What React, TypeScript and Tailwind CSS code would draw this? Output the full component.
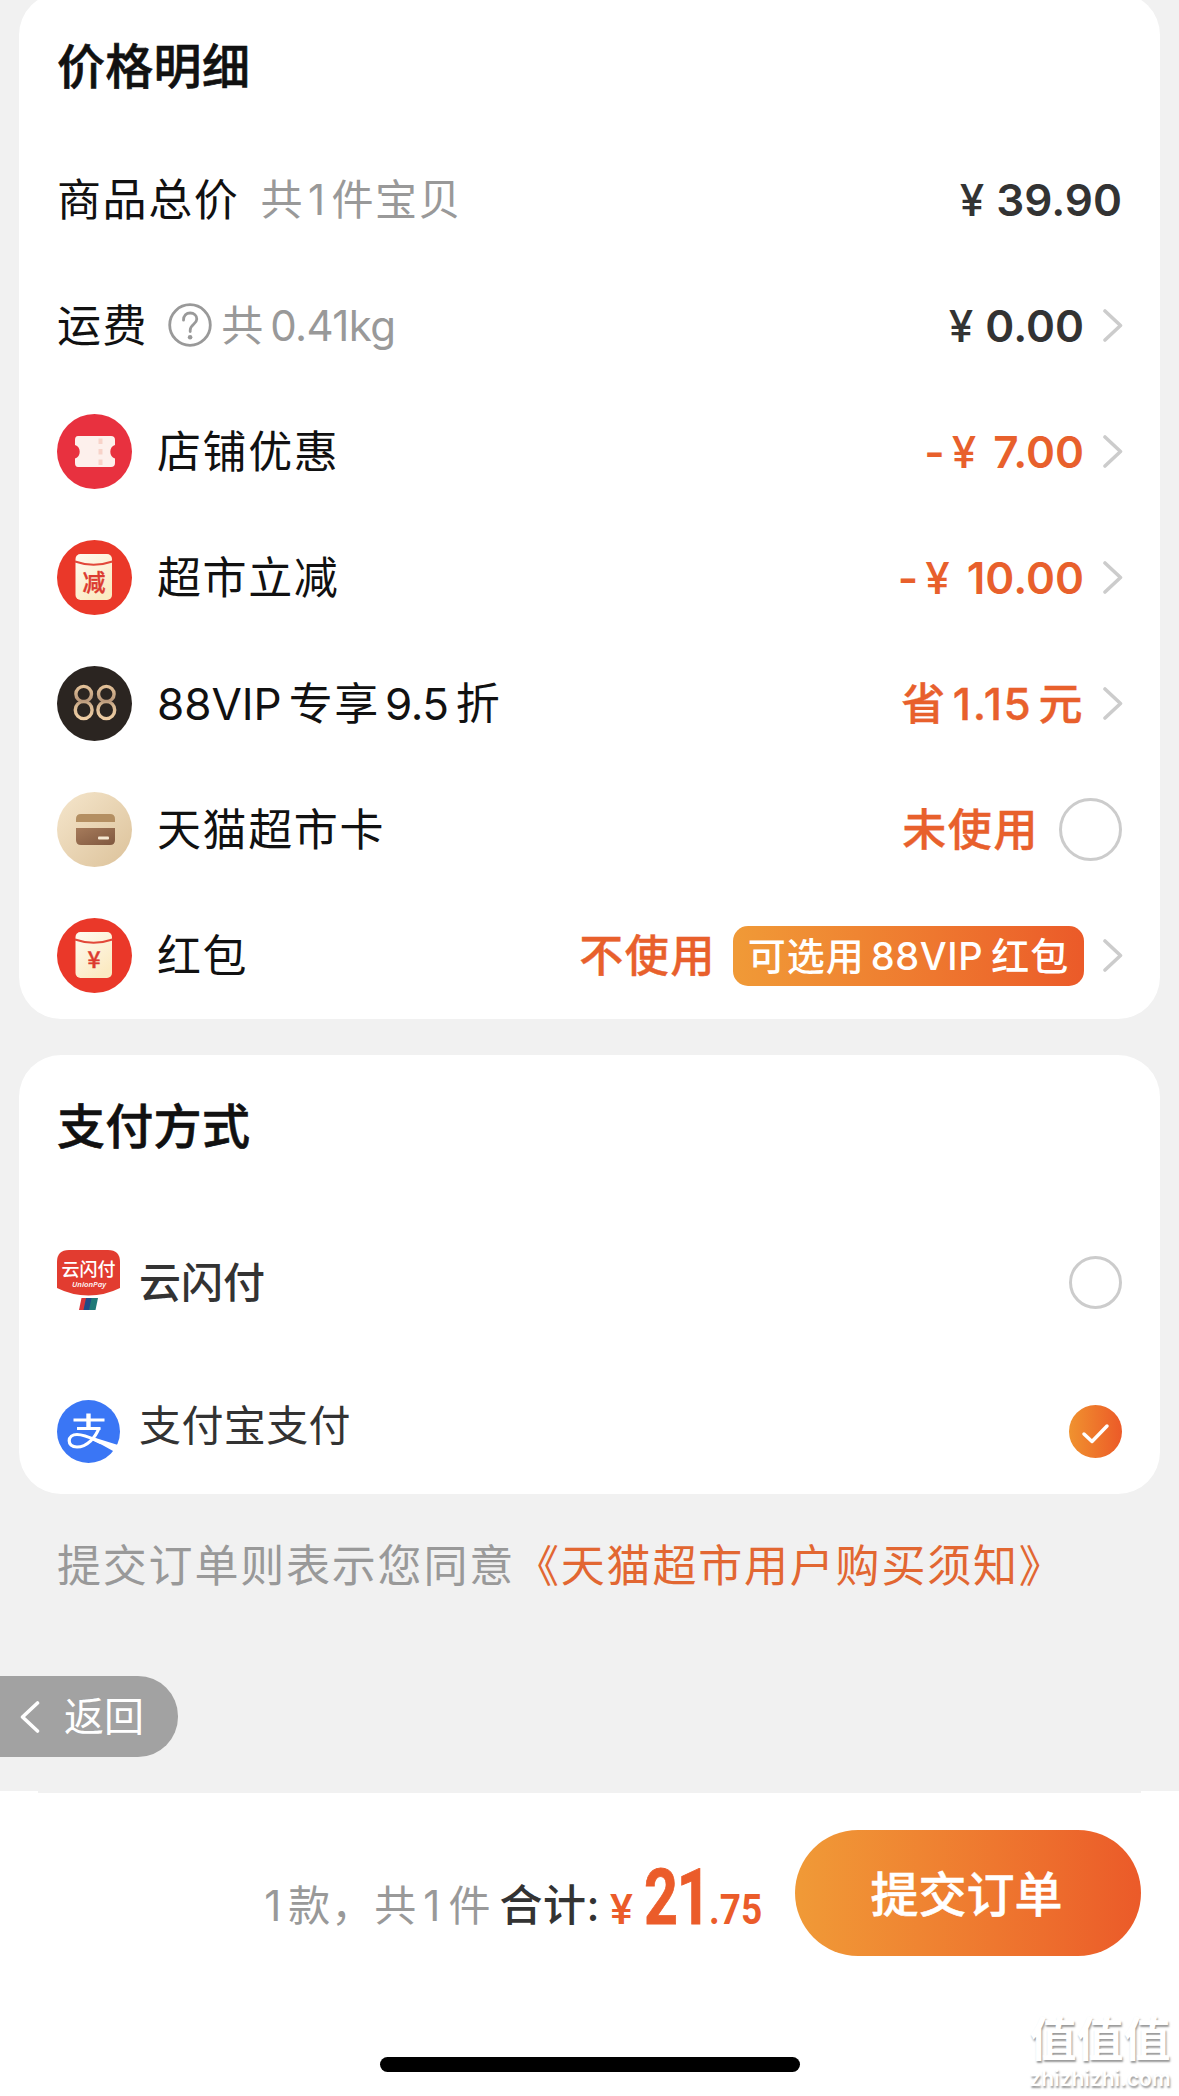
import type { ReactNode } from "react";
import { clsx } from "clsx";

const Chevron = () => (
  <svg className="ml-[17px] -mr-px w-[22px] h-[34px] shrink-0" viewBox="0 0 22 34" fill="none">
    <path d="M4 3 L19.5 17.5 L4 32" stroke="#cccccc" strokeWidth="3.6" strokeLinecap="round" strokeLinejoin="round" />
  </svg>
);

const HelpIcon = () => (
  <svg className="w-[44px] h-[44px] shrink-0" viewBox="0 0 44 44" fill="none" stroke="#999999" strokeWidth="2.8">
    <circle cx="22" cy="22" r="20.3" />
    <path d="M15.5 17.2 C15.5 12.5 18.5 10 22.2 10 C26 10 28.8 12.6 28.8 16 C28.8 21.2 22.2 21.4 22.2 27.2 V28.5" strokeLinecap="round" />
    <circle cx="22.1" cy="34.2" r="2.3" fill="#999999" stroke="none" />
  </svg>
);

const CouponIcon = () => (
  <svg className="w-[75px] h-[75px]" viewBox="0 0 75 75">
    <circle cx="37.5" cy="37.5" r="37.5" fill="#e8313f" />
    <path
      d="M21 22 H54 Q58 22 58 26 V31 A7.2 7.2 0 0 0 58 44.5 V49 Q58 53 54 53 H21 Q18 53 18 49 V44.5 A7.2 7.2 0 0 0 18 31 V26 Q18 22 21 22 Z"
      fill="#fdf0ec"
    />
    <path d="M43.5 24.5 V30 M43.5 35 V40.5 M43.5 45.5 V51" stroke="#f8d3c9" strokeWidth="4" />
  </svg>
);

const PacketIcon = ({ label, id }: { label: string; id: string }) => (
  <svg className="w-[75px] h-[75px]" viewBox="0 0 75 75">
    <defs>
      <linearGradient id={id} x1="0" y1="0" x2="0.6" y2="1">
        <stop offset="0" stopColor="#fffaf0" />
        <stop offset="1" stopColor="#fbeac2" />
      </linearGradient>
    </defs>
    <circle cx="37.5" cy="37.5" r="37.5" fill="#ea3829" />
    <rect x="18.5" y="14" width="36.5" height="46" rx="5" fill={`url(#${id})`} />
    <path d="M18 21.5 Q36.5 28 55.5 21.5" fill="none" stroke="#e2483a" strokeWidth="2" />
    <text
      x="37"
      y={label === "减" ? 50.5 : 49.5}
      textAnchor="middle"
      fontSize="23"
      fontWeight="500"
      stroke="#dc3a30"
      strokeWidth="0.4"
      fill="#dc3a30"
      fontFamily="'Noto Sans CJK SC', sans-serif"
    >
      {label}
    </text>
  </svg>
);

const VipIcon = () => (
  <svg className="w-[75px] h-[75px]" viewBox="0 0 75 75">
    <defs>
      <linearGradient id="vip" gradientUnits="userSpaceOnUse" x1="0" y1="19" x2="0" y2="54">
        <stop offset="0" stopColor="#e6c49a" />
        <stop offset="0.45" stopColor="#b8977a" />
        <stop offset="0.6" stopColor="#d9b993" />
        <stop offset="1" stopColor="#f0cfa5" />
      </linearGradient>
    </defs>
    <circle cx="37.5" cy="37.5" r="37.5" fill="#2b2521" />
    <g fill="none" stroke="url(#vip)" strokeWidth="3.4">
      <ellipse cx="26.7" cy="28" rx="7.8" ry="7.6" />
      <ellipse cx="26.7" cy="44" rx="8.4" ry="8.6" />
      <ellipse cx="49.3" cy="28" rx="7.8" ry="7.6" />
      <ellipse cx="49.3" cy="44" rx="8.4" ry="8.6" />
    </g>
  </svg>
);

const CardIcon = () => (
  <svg className="w-[75px] h-[75px]" viewBox="0 0 75 75">
    <defs>
      <linearGradient id="cardBg" x1="0" y1="0" x2="1" y2="1">
        <stop offset="0" stopColor="#f5e6cc" />
        <stop offset="1" stopColor="#dcc29a" />
      </linearGradient>
      <linearGradient id="cardBody" x1="0" y1="0" x2="1" y2="1">
        <stop offset="0" stopColor="#a67b5b" />
        <stop offset="1" stopColor="#80583f" />
      </linearGradient>
    </defs>
    <circle cx="37.5" cy="37.5" r="37.5" fill="url(#cardBg)" />
    <path d="M19 30 V27 Q19 22 24 22 H53 Q58 22 58 27 V30 Z" fill="#b48f62" />
    <path d="M19 36 H58 V48 Q58 53 53 53 H24 Q19 53 19 48 Z" fill="url(#cardBody)" />
    <rect x="41" y="44.5" width="11" height="3" rx="1" fill="#f6e8d2" />
  </svg>
);

const UnionPayIcon = () => (
  <svg className="mb-[2px] w-[63px] h-[63px]" viewBox="0 0 63 63">
    <path d="M12 0 H51 Q63 0 63 12 V38 Q48 45.5 31.5 45.5 Q15 45.5 0 38 V12 Q0 0 12 0 Z" fill="#e23c30" />
    <text x="31.5" y="26" textAnchor="middle" fontSize="18" fontWeight="500" fill="#fff" fontFamily="'Noto Sans CJK SC', sans-serif">
      云闪付
    </text>
    <text x="32" y="37" textAnchor="middle" fontSize="7.8" fontStyle="italic" fontWeight="600" fill="#fff" fontFamily="'Open Sans', sans-serif">
      UnionPay
    </text>
    <path d="M24.5 48 H30 L27.5 60 H22 Z" fill="#d8353a" />
    <path d="M29 48 H35.5 L33 60 H26.5 Z" fill="#1f4a86" />
    <path d="M34.5 48 H41 L38.5 60 H32 Z" fill="#1f7a78" />
  </svg>
);

const AlipayIcon = () => (
  <svg className="w-[63px] h-[63px]" viewBox="0 0 63 63" fill="none" stroke="#fff">
    <circle cx="31.5" cy="31.5" r="31.5" fill="#3a76f5" stroke="none" />
    <path d="M16.5 20 H47.5 M20 28.5 H43.5" strokeWidth="3" />
    <path d="M31.5 13.5 V28" strokeWidth="4.4" />
    <path d="M42 28 C38.5 37.5 30 47 20 47 C14.5 47 12.2 44 12.2 40.8 C12.2 37 15.500 34.5 20 34.5 C28 34.5 36 39 44 42.5" strokeWidth="3.2" />
    <path d="M37 37.5 L61 45 L57 51.500 Q46 45 35 40 Z" fill="#fff" stroke="none" />
  </svg>
);

type RowProps = {
  icon?: ReactNode;
  label: ReactNode;
  extra?: ReactNode;
  children: ReactNode;
};

const Row = ({ icon, label, extra, children }: RowProps) => (
  <div className="h-[126px] flex items-center whitespace-nowrap">
    {icon && <div className="mr-[25px] shrink-0">{icon}</div>}
    <span className="pt-[2px] text-[44px] tracking-[1.6px] text-[#111111]">{label}</span>
    {extra}
    <div className="ml-auto flex items-center">{children}</div>
  </div>
);

const Price = ({ amount, minus }: { amount: string; minus?: boolean }) => (
  <span className={clsx("pt-[2px] text-[44px] font-semibold flex items-center", minus ? "text-[#e8602c]" : "text-[#333333]")}>
    {minus && <span className="mr-[7px]">-</span>}
    <span className={clsx("font-medium", minus ? "mr-[17px]" : "mr-[12px]")}>¥</span>
    <span>{amount}</span>
  </span>
);

const Status = ({ children }: { children: ReactNode }) => (
  <span className="pt-[2px] text-[44px] font-medium tracking-[1.6px] text-[#e8602c] [-webkit-text-stroke:0.4px_#e8602c]">{children}</span>
);

const discounts = [
  { icon: <CouponIcon />, label: "店铺优惠", amount: "7.00" },
  { icon: <PacketIcon label="减" id="packetCut" />, label: "超市立减", amount: "10.00" },
];

const App = () => {
  return (
    <div className="relative w-[1179px] h-[2096px] overflow-hidden flex flex-col bg-[#f1f1f1] leading-none font-['Inter','Noto_Sans_CJK_SC',sans-serif]">
      {/* price details */}
      <section className="mt-[-7px] mx-[19px] h-[1026px] shrink-0 rounded-[42px] bg-white px-[38px]">
        <h2 className="h-[143px] pt-[4px] flex items-center text-[48px] font-medium tracking-[0.3px] text-[#111111] [-webkit-text-stroke:0.6px_#111111]">
          价格明细
        </h2>
        <Row
          label="商品总价"
          extra={
            <span className="pt-[2px] ml-[21px] text-[42px] tracking-[1.5px] text-[#999999]">
              共<span className="ml-[4px] mr-[5px]">1</span>件宝贝
            </span>
          }
        >
          <Price amount="39.90" />
        </Row>
        <Row
          label="运费"
          extra={
            <div className="ml-[20px] flex items-center gap-[9px] text-[42px] text-[#999999]">
              <HelpIcon />
              <span className="pt-[2px]">共<span className="ml-[7px] tracking-[-0.6px]">0.41kg</span></span>
            </div>
          }
        >
          <Price amount="0.00" />
          <Chevron />
        </Row>
        {discounts.map((item) => (
          <Row key={item.label} icon={item.icon} label={item.label}>
            <Price amount={item.amount} minus />
            <Chevron />
          </Row>
        ))}
        <Row
          icon={<VipIcon />}
          label={
            <>
              <span className="mr-[7px]">
                <span className="tracking-normal">88VIP</span>
              </span>
              专享
              <span className="ml-[5px] mr-[7px] tracking-[-0.4px]">9.5</span>折
            </>
          }
        >
          <Status>省<span className="ml-[6px] mr-[6px]">1.15</span>元</Status>
          <Chevron />
        </Row>
        <Row icon={<CardIcon />} label="天猫超市卡">
          <Status>未使用</Status>
          <span className="ml-[20px] w-[63px] h-[63px] rounded-full border-[3px] border-[#cccccc]" />
        </Row>
        <Row icon={<PacketIcon label="¥" id="packetYuan" />} label="红包">
          <Status>不使用</Status>
          <span className="ml-[17px] mt-px w-[351px] h-[60px] rounded-[15px] bg-linear-to-r from-[#f09a37] to-[#eb5a29] flex items-center justify-center text-[38px] font-medium tracking-[1px] text-white">
            可选用<span className="ml-[6px] mr-[8px] tracking-[0.6px]">88VIP</span>红包
          </span>
          <Chevron />
        </Row>
      </section>

      {/* payment method */}
      <section className="mt-[36px] mx-[19px] h-[439px] shrink-0 rounded-[42px] bg-white px-[38px]">
        <h2 className="h-[140px] pt-[3px] flex items-center text-[48px] font-medium tracking-[0.3px] text-[#111111] [-webkit-text-stroke:0.6px_#111111]">
          支付方式
        </h2>
        <div className="mt-[13px] h-[148px] flex items-center">
          <UnionPayIcon />
          <span className="ml-[19px] pt-px text-[42px] font-medium text-[#333333]">云闪付</span>
          <span className="ml-auto w-[53px] h-[53px] rounded-full border-[3px] border-[#cccccc]" />
        </div>
        <div className="mt-px h-[148px] flex items-center">
          <AlipayIcon />
          <span className="ml-[19px] mb-[10px] text-[42px] tracking-[0.4px] text-[#333333]">支付宝支付</span>
          <svg className="ml-auto w-[53px] h-[53px]" viewBox="0 0 53 53">
            <defs>
              <linearGradient id="check">
                <stop offset="0" stopColor="#f0922f" />
                <stop offset="1" stopColor="#ec5a28" />
              </linearGradient>
            </defs>
            <circle cx="26.5" cy="26.5" r="26.5" fill="url(#check)" />
            <path d="M15 29 L23 36.5 L38 21" fill="none" stroke="#fff" strokeWidth="3.5" strokeLinecap="round" strokeLinejoin="round" />
          </svg>
        </div>
      </section>

      <p className="h-[142px] pt-[2px] shrink-0 pl-[57px] flex items-center whitespace-nowrap text-[44px] tracking-[1.8px] text-[#999999]">
        提交订单则表示您同意<span className="text-[#e26732]">《天猫超市用户购买须知》</span>
      </p>

      <button className="mt-[40px] w-[178px] h-[81px] shrink-0 rounded-r-[40px] bg-[#a2a2a2] pl-[19px] flex items-center text-[40px] text-white">
        <svg className="w-[22px] h-[32px] mr-[23px]" viewBox="0 0 22 32" fill="none">
          <path d="M18.5 2 L3.5 16 L18.5 30" stroke="#fff" strokeWidth="3.6" strokeLinecap="round" strokeLinejoin="round" />
        </svg>
        返回
      </button>

      {/* submit bar */}
      <footer className="mt-[34px] flex-1 bg-white flex flex-col">
        <div className="mx-[38px] h-[2px] bg-[#f1f1f1]" />
        <div className="mt-[37px] h-[126px] pr-[38px] flex items-center justify-end whitespace-nowrap">
          <div className="mt-[10px] mr-[33px] flex items-baseline">
            <span className="-translate-y-[3px] text-[42px] tracking-[1px] text-[#999999]">
              <span className="mr-[6px]">1</span>款，共<span className="ml-[6px] mr-[7px]">1</span>件
            </span>
            <span className="ml-[8px] -translate-y-[3px] text-[43px] font-medium tracking-[0.5px] text-[#333333]">
              合计:
            </span>
            <span className="ml-[11px] flex items-baseline font-bold text-[#eb5c2a] font-['Roboto','Noto_Sans_CJK_SC',sans-serif]">
              <span className="text-[43px] w-[34px] -ml-px font-medium">¥</span>
              <span className="w-[65px] text-[78px] tracking-[-1.5px] [-webkit-text-stroke:0.8px_#eb5c2a]">
                <span className="inline-block origin-left scale-x-[0.76]">21</span>
              </span>
              <span className="w-[53px] text-[43px]">
                <span className="inline-block origin-left scale-x-[0.86]">.75</span>
              </span>
            </span>
          </div>
          <button className="w-[346px] h-[126px] rounded-full bg-linear-to-r from-[#f09a37] to-[#eb5a29] pt-[3px] pr-[3px] text-[48px] font-medium text-white [-webkit-text-stroke:0.5px_#ffffff]">
            提交订单
          </button>
        </div>
        <div className="mt-[101px] mx-auto w-[420px] h-[15px] rounded-full bg-black" />
      </footer>

      {/* site watermark */}
      <div className="absolute right-[8px] bottom-[7px] w-[142px] flex flex-col items-center text-white [text-shadow:1px_2px_2px_#999999]">
        <span className="text-[47px] font-bold">值值值</span>
        <span className="mt-[6px] text-[21px] font-semibold">zhizhizhi.com</span>
      </div>
    </div>
  );
};

export default App;
